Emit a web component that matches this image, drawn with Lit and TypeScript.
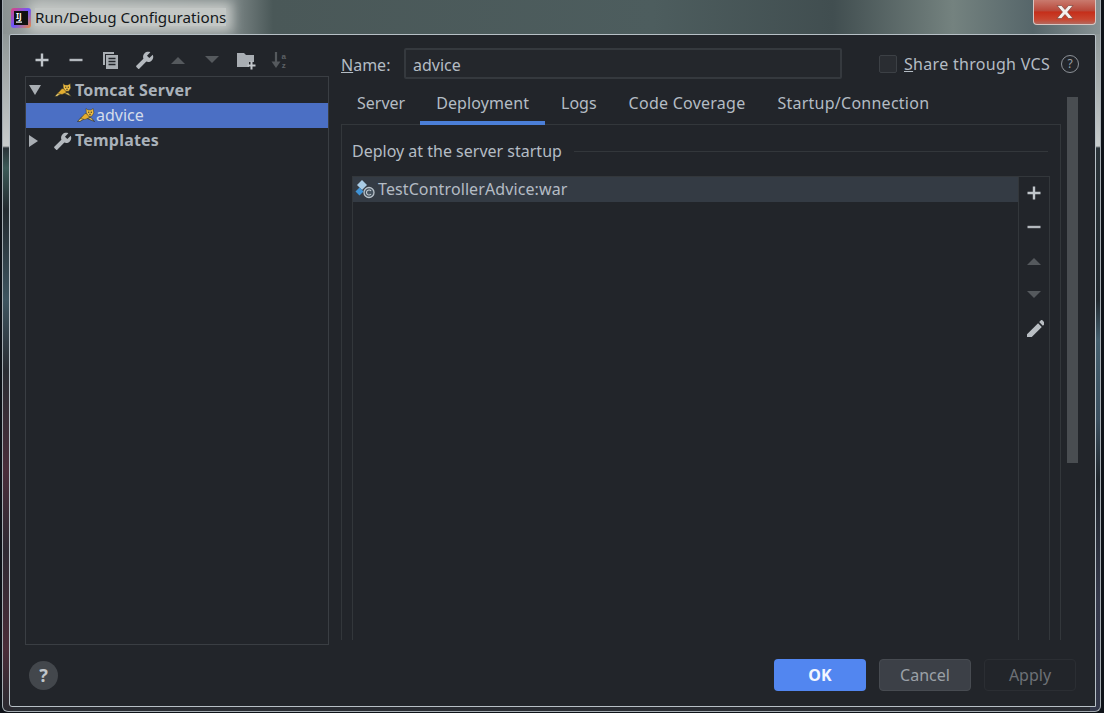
import { css, html, LitElement, svg } from "lit";
import { customElement, property } from "lit/decorators.js";

const WRENCH = "M22.7 19l-9.1-9.1c.9-2.3.4-5-1.5-6.9-2-2-5-2.4-7.4-1.3L9 6 6 9 1.6 4.7C.4 7.1.9 10.1 2.9 12.1c1.9 1.9 4.6 2.4 6.9 1.5l9.1 9.1c.4.4 1 .4 1.4 0l2.3-2.3c.5-.4.5-1.1.1-1.4z";
const PENCIL = "M3 17.25V21h3.75L17.81 9.94l-3.75-3.75L3 17.25zM20.71 7.04c.39-.39.39-1.02 0-1.41l-2.34-2.34c-.39-.39-1.02-.39-1.41 0l-1.83 1.83 3.75 3.75 1.83-1.83z";

// Toolbar icons, all drawn in a 20x20 box
const plusIcon = svg`<path d="M10 3.5v13M3.5 10h13" stroke="#c0c5ca" stroke-width="2.4" fill="none"/>`;
const minusIcon = svg`<path d="M3.5 10h13" stroke="#b4b9be" stroke-width="2.4" fill="none"/>`;
const copyIcon = svg`
    <path d="M5 15H3V2h11v2H5z" fill="#a9aeb3"/>
    <path d="M6 5h12v14H6z" fill="#a9aeb3"/>
    <path d="M8.5 8.5h7M8.5 11.5h7M8.5 14.5h7" stroke="#23262b" stroke-width="1.4"/>`;
const wrenchIcon = svg`<path transform="translate(20 1) scale(-.78 .78)" d="${WRENCH}" fill="#b4b9be"/>`;
const upIcon = svg`<path d="M3 14L10 7l7 7z" fill="#55595d"/>`;
const downIcon = svg`<path d="M3 6h14l-7 7z" fill="#55595d"/>`;
const folderIcon = svg`
    <path d="M1 3h7l2 2h8v7h-5v5H1z" fill="#a9aeb3"/>
    <path d="M15.5 11.5v8M11.5 15.5h8" stroke="#c4c8cc" stroke-width="2"/>`;
const sortIcon = svg`
    <path d="M6 2v13" stroke="#55595d" stroke-width="2.2"/>
    <path d="M1.5 11.5L6 18l4.500-6.500z" fill="#55595d"/>
    <text x="11.500" y="8.500" font-size="8" font-weight="700" font-family="Liberation Sans" fill="#5d6165">a</text>
    <text x="11.800" y="18" font-size="8" font-weight="700" font-family="Liberation Sans" fill="#5d6165">z</text>`;
const pencilIcon = svg`<path d="${PENCIL}" fill="#b9bec3"/>`;

@customElement("tb-icon")
export class ToolbarIcon extends LitElement {
    @property({ attribute: false })
    glyph: unknown = null;

    render() {
        return html`<svg width="20" height="20" viewBox="0 0 20 20">${this.glyph}</svg>`;
    }

    static styles = css`
        :host {
            display: flex;
        }
    `;
}

@customElement("app-root")
export class AppRoot extends LitElement {
    tomcat() {
        return html`
        <svg width="18" height="15" viewBox="0 0 18 15">
            <path d="M0.500 13.500L4.500 9 7 11 3 13.500zM10 10.500L14 9.500 17.500 13.500z" fill="#dcc068" stroke="#23231c" stroke-width=".6"/>
            <path d="M3.500 10.500L8 5.500 11 6 12.500 9.500 8 11.500z" fill="#e4ae30" stroke="#3a3524" stroke-width=".5"/>
            <path d="M9 0.500L11 2H14L16.200 0.500 16.800 5 14.800 8.200H11.500L9.300 5z" fill="#eebd42" stroke="#3a3524" stroke-width=".5"/>
            <path d="M11 4.200h1.300M13.700 4.200H15M12.300 6.300h1.400" stroke="#2b2a22" stroke-width="1"/>
        </svg>`;
    }

    renderTree() {
        return html`
        <div class="tree">
            <div class="row first">
                <span class="tri down"></span>
                <span class="node-icon">${this.tomcat()}</span>
                <b>Tomcat Server</b>
            </div>
            <div class="row selected">
                <span class="child-icon">${this.tomcat()}</span>
                <span>advice</span>
            </div>
            <div class="row">
                <span class="tri side-tri"></span>
                <span class="node-icon tool"><tb-icon .glyph=${wrenchIcon}></tb-icon></span>
                <b>Templates</b>
            </div>
        </div>`;
    }

    renderDeployment() {
        return html`
        <div class="panel">
            <div class="section">
                <span>Deploy at the server startup</span>
                <i class="rule"></i>
            </div>
            <div class="table">
                <div class="list">
                    <div class="artifact">
                        <svg width="20" height="20" viewBox="0 0 20 20">
                            <path d="M7 1l5 5-5 5-5-5z" fill="#a9cbe4"/>
                            <path d="M4.500 8.500l4 4-4 4-4-4z" fill="#3f93d6"/>
                            <circle cx="14" cy="13.500" r="5" fill="#46535f" stroke="#b8c1c9" stroke-width="1.300"/>
                            <path d="M16 12a2.500 2.500 0 1 0 0 3" fill="none" stroke="#c4ccd3" stroke-width="1.100"/>
                        </svg>
                        <span>TestControllerAdvice:war</span>
                    </div>
                </div>
                <div class="side">
                    <tb-icon .glyph=${plusIcon}></tb-icon>
                    <tb-icon .glyph=${minusIcon}></tb-icon>
                    <tb-icon .glyph=${upIcon}></tb-icon>
                    <tb-icon .glyph=${downIcon}></tb-icon>
                    <tb-icon .glyph=${pencilIcon}></tb-icon>
                </div>
            </div>
        </div>`;
    }

    render() {
        const tabs = [
            { name: "Server", cls: "first-tab" },
            { name: "Deployment", cls: "active" },
            { name: "Logs", cls: "" },
            { name: "Code Coverage", cls: "spaced-tab" },
            { name: "Startup/Connection", cls: "spaced-tab" },
        ];
        const tools = [plusIcon, minusIcon, copyIcon, wrenchIcon, upIcon, downIcon, folderIcon, sortIcon];
        return html`
        <div class="desktop">
            <div class="frame">
                <div class="titlebar">
                    <svg class="logo" width="20" height="20" viewBox="0 0 20 20">
                        <defs>
                            <linearGradient id="ij" x1="0" y1="0" x2="1" y2="1">
                                <stop offset="0" stop-color="#e0457b"/>
                                <stop offset=".5" stop-color="#6b57ff"/>
                                <stop offset="1" stop-color="#f0883a"/>
                            </linearGradient>
                        </defs>
                        <rect width="20" height="20" rx="3" fill="url(#ij)"/>
                        <rect x="3" y="3" width="14" height="14" fill="#111"/>
                        <text x="5" y="11" font-size="8" font-weight="700" font-family="Noto Sans" fill="#fff">IJ</text>
                        <rect x="5" y="13.500" width="6" height="1.200" fill="#fff"/>
                    </svg>
                    <span class="title">Run/Debug Configurations</span>
                    <div class="close">
                        <svg width="20" height="16" viewBox="0 0 20 16">
                            <path d="M2 1.500h4.500L10 5.500l3.500-4H18l-5.500 6.500 5.500 6.500h-4.500L10 10.500l-3.500 4H2l5.500-6.500z" fill="#f4f0ee" stroke="#6d3b33" stroke-width=".6"/>
                        </svg>
                    </div>
                </div>
                <div class="dialog">
                    <div class="body">
                        <div class="left">
                            <div class="tools">
                                ${tools.map(t => html`<tb-icon .glyph=${t}></tb-icon>`)}
                            </div>
                            ${this.renderTree()}
                        </div>
                        <div class="main">
                            <div class="name-row">
                                <label class="name-label"><u>N</u>ame:</label>
                                <div class="input">advice</div>
                                <span class="checkbox"></span>
                                <label class="share"><u>S</u>hare through VCS</label>
                                <span class="help-small">?</span>
                            </div>
                            <div class="content">
                                <div class="tab-col">
                                    <div class="tabs">
                                        ${tabs.map(t => html`<div class="tab ${t.cls}">${t.name}</div>`)}
                                    </div>
                                    ${this.renderDeployment()}
                                </div>
                                <div class="track"><div class="thumb"></div></div>
                            </div>
                        </div>
                    </div>
                    <div class="footer">
                        <div class="help">?</div>
                        <div class="buttons">
                            <div class="btn ok">OK</div>
                            <div class="btn cancel">Cancel</div>
                            <div class="btn apply">Apply</div>
                        </div>
                    </div>
                </div>
            </div>
        </div>`;
    }

    static styles = css`
        :host {
            display: block;
            font-family: "Noto Sans", "Open Sans", sans-serif;
            font-size: 16px;
            color: #b4bcc4;
        }

        .desktop {
            box-sizing: border-box;
            width: 1104px;
            height: 713px;
            overflow: hidden;
            padding: 0 3px 1px 2px;
            background: #0e1218;
        }

        .frame {
            box-sizing: border-box;
            height: 100%;
            display: flex;
            flex-direction: column;
            padding: 0 4px 4px 6px;
            border: 1px solid #a4acb2;
            border-top: none;
            border-radius: 0 0 6px 6px;
            background:
                linear-gradient(90deg, #8a9292 0, #a0a5a4 40px, #7c8686 230px, #4a5858 270px, #4d5d5e 650px, #414e50 830px, #74827f 950px, #56666a 1030px, #8a9496 1100px) 0 0 / 100% 34px no-repeat,
                linear-gradient(#7d8686 0, #c8cccc 146px, #2a3338 148px, #3c5a58 168px, #232a2f 210px, #3e5560 300px, #2a2d33 370px, #4a2d3a 470px, #2f2a33 550px, #4a2c38 650px, #2a2a30 100%) 0 0 / 10px 100% no-repeat,
                linear-gradient(#7d8686 0, #c8cccc 146px, #2a3338 148px, #232a30 300px, #46606f 340px, #3c5060 420px, #20262c 480px, #363a4c 600px, #34384a 100%) 100% 0 / 10px 100% no-repeat,
                #2a2d33;
        }

        .titlebar {
            height: 34px;
            display: flex;
            align-items: flex-start;
            flex: none;
            overflow: hidden;
        }

        .logo {
            position: relative;
            z-index: 1;
            margin: 8px 0 0 2px;
        }

        .title {
            margin: 8px 0 0 4px;
            font-size: 15.200px;
            line-height: 18px;
            color: #14171a;
            background: #c3c7c5;
            box-shadow: 0 0 11px 6px #c3c7c5;
        }

        .close {
            margin-left: auto;
            width: 63px;
            height: 25px;
            box-sizing: border-box;
            border: 1px solid #d8c6c2;
            border-top: none;
            border-radius: 0 0 4px 4px;
            display: flex;
            align-items: center;
            justify-content: center;
            background: linear-gradient(#c97a6e 0, #b9483a 45%, #c52e1a 50%, #c9452f 80%, #b3695e 100%);
        }

        .dialog {
            flex: 1;
            min-height: 0;
            display: flex;
            flex-direction: column;
            background: #22252a;
            border: 1px solid #b7c0c6;
            border-radius: 2px 2px 0 3px;
        }

        .body {
            flex: 1;
            min-height: 0;
            display: flex;
            padding: 13px 16px 0 15px;
            gap: 12px;
        }

        .left {
            width: 304px;
            flex: none;
            display: flex;
            flex-direction: column;
        }

        .tools {
            height: 28px;
            flex: none;
            display: flex;
            gap: 14px;
            padding: 0 0 5px 7px;
            box-sizing: border-box;
            align-items: center;
        }

        .tree {
            flex: 1;
            border: 1px solid #3a3e43;
            font-size: 16px;
            line-height: 25px;
        }

        .row {
            height: 25px;
            display: flex;
            align-items: center;
        }

        .row.first {
            height: 26px;
        }

        .row b {
            font-weight: 700;
            color: #aab2ba;
            letter-spacing: 0.200px;
        }

        .selected {
            background: #4b6fc4;
            color: #d4dcea;
        }

        .tri {
            width: 0;
            height: 0;
            flex: none;
            margin-left: 3px;
        }

        .tri.down {
            border-left: 6px solid transparent;
            border-right: 6px solid transparent;
            border-top: 10px solid #a9aeb3;
        }

        .tri.side-tri {
            margin-right: 3px;
            border-top: 6px solid transparent;
            border-bottom: 6px solid transparent;
            border-left: 9px solid #a9aeb3;
        }

        .node-icon {
            width: 18px;
            margin-left: 13px;
            margin-right: 3px;
            display: flex;
        }

        .node-icon.tool {
            width: 20px;
            margin-left: 11px;
            margin-right: 3px;
        }

        .child-icon {
            display: flex;
            margin-left: 51px;
            margin-right: 1px;
        }

        .main {
            flex: 1;
            min-width: 0;
            display: flex;
            flex-direction: column;
        }

        .name-row {
            height: 31px;
            flex: none;
            display: flex;
            align-items: center;
        }

        .name-label {
            width: 63px;
            padding-top: 2px;
        }

        .input {
            box-sizing: border-box;
            width: 438px;
            height: 31px;
            padding: 1px 7px 0;
            line-height: 28px;
            border: 2px solid #35393e;
            background: #24272c;
            border-radius: 2px;
        }

        .checkbox {
            box-sizing: border-box;
            width: 18px;
            height: 18px;
            margin-left: 37px;
            border: 1px solid #3c4045;
            background: #2a2d32;
            border-radius: 2px;
        }

        .share {
            margin-left: 7px;
            letter-spacing: 0.300px;
        }

        .help-small {
            box-sizing: border-box;
            width: 18px;
            height: 18px;
            margin-left: 11px;
            border: 1.500px solid #8d9298;
            border-radius: 50%;
            font-size: 12px;
            line-height: 15px;
            text-align: center;
            color: #9aa0a6;
        }

        .content {
            flex: 1;
            min-height: 0;
            display: flex;
            gap: 6px;
        }

        .tab-col {
            width: 720px;
            flex: none;
            display: flex;
            flex-direction: column;
        }

        .tabs {
            height: 45px;
            flex: none;
            display: flex;
            box-sizing: border-box;
            padding-top: 5px;
        }

        .tab {
            position: relative;
            padding: 0 16px;
            height: 41px;
            box-sizing: border-box;
            line-height: 38px;
            white-space: nowrap;
        }

        .tab.first-tab {
            padding-right: 15px;
        }

        .tab.active {
            border-bottom: 4px solid #4b7fd8;
            letter-spacing: 0.100px;
        }

        .tab.spaced-tab {
            letter-spacing: 0.250px;
        }

        .panel {
            height: 516px;
            box-sizing: border-box;
            padding: 14px 10px 0;
            border: 1px solid #33373b;
            border-bottom: none;
            display: flex;
            flex-direction: column;
        }

        .section {
            height: 24px;
            flex: none;
            display: flex;
            align-items: center;
            gap: 12px;
            padding-right: 2px;
            white-space: nowrap;
        }

        .rule {
            flex: 1;
            height: 1px;
            background: #33373b;
        }

        .table {
            flex: 1;
            margin-top: 13px;
            display: flex;
            border: 1px solid #33373b;
            border-bottom: none;
        }

        .list {
            flex: 1;
        }

        .artifact {
            box-sizing: border-box;
            height: 25px;
            display: flex;
            align-items: center;
            gap: 3px;
            padding: 0 0 2px 2px;
            letter-spacing: 0.100px;
            background: #343b44;
        }

        .side {
            width: 30px;
            flex: none;
            border-left: 1px solid #33373b;
            display: flex;
            flex-direction: column;
            align-items: center;
            gap: 14px;
            padding-top: 6px;
        }

        .side tb-icon:last-child {
            margin-top: -2px;
        }

        .track {
            width: 11px;
            flex: none;
            padding-top: 18px;
        }

        .thumb {
            height: 366px;
            background: #494d51;
        }

        .footer {
            height: 61px;
            flex: none;
            box-sizing: border-box;
            padding: 14px 19px 0 19px;
            display: flex;
            justify-content: space-between;
            align-items: flex-start;
        }

        .help {
            width: 29px;
            height: 29px;
            margin-top: 2px;
            border-radius: 50%;
            background: #43474c;
            color: #c0c5ca;
            font-size: 18px;
            font-weight: 700;
            line-height: 29px;
            text-align: center;
        }

        .buttons {
            display: flex;
            gap: 13px;
        }

        .btn {
            box-sizing: border-box;
            width: 92px;
            height: 32px;
            line-height: 30px;
            text-align: center;
            border-radius: 4px;
            border: 1px solid transparent;
        }

        .ok {
            background: #5286f0;
            color: #f2f6ff;
            font-weight: 700;
        }

        .cancel {
            background: #3c4047;
            border-color: #474b51;
            color: #9ba1a7;
        }

        .apply {
            border-color: #2b2e33;
            color: #6d7176;
        }
    `;
}
